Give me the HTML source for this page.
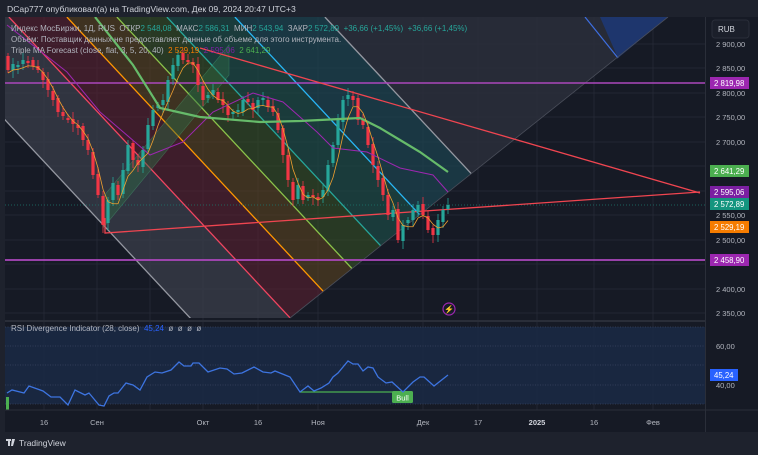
<!DOCTYPE html>
<html><head><meta charset="utf-8">
<style>
html,body{margin:0;padding:0;background:#1e222d;}
body{width:758px;height:455px;overflow:hidden;position:relative;font-family:"Liberation Sans",sans-serif;}
.t{position:absolute;white-space:nowrap;font-size:8px;color:#b2b5be;}
</style></head><body>
<div class="t" style="left:7px;top:4px;font-size:8.6px;color:#d1d4dc">DCap777 опубликовал(а) на TradingView.com, Дек 09, 2024 20:47 UTC+3</div>
<svg id="s" width="758" height="455" style="position:absolute;left:0;top:0" xmlns="http://www.w3.org/2000/svg">
<defs>
<clipPath id="main"><rect x="5" y="17" width="700" height="303"/></clipPath>
<clipPath id="fib"><polygon points="-200,17 668,17 290,318 -200,318"/></clipPath>
</defs>
<rect x="5" y="17" width="700" height="415" fill="#161a25"/>
<rect x="705" y="17" width="53" height="415" fill="#161a25"/>
<g stroke="#232734" stroke-width="1">
<line x1="5" x2="705" y1="44" y2="44"/><line x1="5" x2="705" y1="68" y2="68"/><line x1="5" x2="705" y1="93" y2="93"/><line x1="5" x2="705" y1="117" y2="117"/><line x1="5" x2="705" y1="142" y2="142"/><line x1="5" x2="705" y1="166" y2="166"/><line x1="5" x2="705" y1="191" y2="191"/><line x1="5" x2="705" y1="215" y2="215"/><line x1="5" x2="705" y1="240" y2="240"/><line x1="5" x2="705" y1="264" y2="264"/><line x1="5" x2="705" y1="289" y2="289"/><line x1="5" x2="705" y1="313" y2="313"/>
<line x1="44" x2="44" y1="17" y2="410"/><line x1="97" x2="97" y1="17" y2="410"/><line x1="150" x2="150" y1="17" y2="410"/><line x1="203" x2="203" y1="17" y2="410"/><line x1="258" x2="258" y1="17" y2="410"/><line x1="318" x2="318" y1="17" y2="410"/><line x1="423" x2="423" y1="17" y2="410"/><line x1="478" x2="478" y1="17" y2="410"/><line x1="537" x2="537" y1="17" y2="410"/><line x1="594" x2="594" y1="17" y2="410"/><line x1="653" x2="653" y1="17" y2="410"/>
</g>
<g clip-path="url(#main)">
<g clip-path="url(#fib)" id="fibg"></g>
<polygon points="600,17 668,17 618,58" fill="#1d3a7a" opacity="0.8"/>
<line x1="585" y1="17" x2="618" y2="58" stroke="#3d6ee0" stroke-width="1.2"/>
<line x1="290" y1="318" x2="668" y2="17" stroke="#4a4e5a" stroke-width="0.8"/>
<polygon points="103,228 229,75 229,45 103,197" fill="#2e6b45" opacity="0.45" stroke="#4caf7a" stroke-width="0.6"/>
<line x1="5" y1="83" x2="705" y2="83" stroke="#ab47bc" stroke-width="1.5"/>
<line x1="5" y1="260" x2="705" y2="260" stroke="#ab47bc" stroke-width="1.8"/>
<line x1="5" y1="205" x2="705" y2="205" stroke="#1b7a70" stroke-width="0.7" stroke-dasharray="1,2"/>
<polyline points="200,48 700,193" fill="none" stroke="#f04550" stroke-width="1.3"/>
<polyline points="105,218 105,233 700,192" fill="none" stroke="#f04550" stroke-width="1.3"/>
<g id="cand"></g>
<polyline id="purp" fill="none" stroke="#9c27b0" stroke-width="1" points="7,25 67,72 100,112 150,155 183,142 213,112 253,93 283,102 317,132 333,148 367,152 400,168 433,175 448,192"/>
<polyline fill="none" stroke="#66bb6a" stroke-width="2.2" points="95,17 133,65 160,108 200,117 260,122 300,121 340,119 360,118 380,128 400,140 420,152 448,172"/>
<polyline id="ora" fill="none" stroke="#f0a030" stroke-width="0.8"/>
<circle cx="449" cy="309" r="6" fill="none" stroke="#9c27b0" stroke-width="1.2"/>
<text x="449" y="312" font-size="8" fill="#b04ad0" text-anchor="middle">⚡</text>
</g>
<line x1="5" x2="705" y1="321" y2="321" stroke="#2a2e39" stroke-width="2"/>
<rect x="5" y="327" width="700" height="77" fill="#1a2a45" opacity="0.85"/>
<g stroke="#3a4560" stroke-width="0.8" stroke-dasharray="1,1.5">
<line x1="5" x2="705" y1="327" y2="327"/><line x1="5" x2="705" y1="346" y2="346"/><line x1="5" x2="705" y1="365" y2="365"/><line x1="5" x2="705" y1="385" y2="385"/><line x1="5" x2="705" y1="404" y2="404"/>
</g>
<line x1="300" y1="392" x2="403" y2="392" stroke="#4caf50" stroke-width="1.2"/>
<rect x="392" y="391" width="21" height="12" rx="1.5" fill="#4caf50"/>
<text x="402.5" y="400.5" font-size="7.5" fill="#fff" text-anchor="middle">Bull</text>
<rect x="6" y="397" width="3" height="13" fill="#4caf50"/>
<polyline fill="none" stroke="#3d74e0" stroke-width="1.3" points="7,393 12,390 24,393 29,386 43,391 51,397 60,397 68,405 75,390 85,395 89,393 99,405 104,406 109,396 114,393 118,393 126,383 133,385 140,390 147,377 155,372 162,373 171,370 179,362 184,366 191,366 193,363 199,363 208,372 220,368 227,369 234,374 242,373 254,367 263,372 271,373 275,371 285,375 290,377 300,392 308,386 314,391 321,388 329,383 333,377 338,373 348,361 353,364 358,364 363,371 368,367 373,368 378,377 386,383 392,382 403,392 413,382 420,377 424,377 434,386 448,375"/>
<line x1="5" x2="758" y1="410" y2="410" stroke="#2a2e39"/>
<line x1="705.5" x2="705.5" y1="17" y2="432" stroke="#2a2e39"/>
<g font-size="7.5" fill="#b2b5be" text-anchor="middle">
<text x="44" y="425">16</text><text x="97" y="425">Сен</text><text x="203" y="425">Окт</text><text x="258" y="425">16</text><text x="318" y="425">Ноя</text><text x="423" y="425">Дек</text><text x="478" y="425">17</text><text x="537" y="425" font-weight="bold" fill="#d1d4dc">2025</text><text x="594" y="425">16</text><text x="653" y="425">Фев</text>
</g>
<g font-size="7.5" fill="#b2b5be">
<text x="716" y="47">2 900,00</text><text x="716" y="71">2 850,00</text><text x="716" y="96">2 800,00</text><text x="716" y="120">2 750,00</text><text x="716" y="145">2 700,00</text><text x="716" y="218">2 550,00</text><text x="716" y="243">2 500,00</text><text x="716" y="292">2 400,00</text><text x="716" y="316">2 350,00</text>
<text x="716" y="349">60,00</text><text x="716" y="388">40,00</text>
</g>
<rect x="712" y="20" width="37" height="18" rx="3" fill="#1b1f2a" stroke="#2a2e39"/>
<text x="718" y="32" font-size="8" fill="#d1d4dc">RUB</text>
<g font-size="7.8" fill="#fff">
<rect x="710" y="77" width="39" height="12" fill="#9c27b0"/><text x="714" y="86">2 819,98</text>
<rect x="710" y="165" width="39" height="12" fill="#4caf50"/><text x="714" y="174">2 641,29</text>
<rect x="710" y="186" width="39" height="12" fill="#7b1fa2"/><text x="714" y="195">2 595,06</text>
<rect x="710" y="198" width="39" height="12" fill="#14957f"/><text x="714" y="207">2 572,89</text>
<rect x="710" y="221" width="39" height="12" fill="#f57c00"/><text x="714" y="230">2 529,19</text>
<rect x="710" y="254" width="39" height="12" fill="#9c27b0"/><text x="714" y="263">2 458,90</text>
<rect x="710" y="369" width="28" height="12" fill="#2962ff"/><text x="714" y="378">45,24</text>
</g>
<g transform="translate(6,439)" fill="#d1d4dc"><rect x="0" y="0" width="5" height="2"/><rect x="2" y="0" width="2" height="7"/><path d="M6 0h3l-2 7h-2z"/></g>
<text x="19" y="446" font-size="8.5" fill="#d1d4dc">TradingView</text>
</svg>
<div class="t" style="left:11px;top:24px">Индекс МосБиржи, 1Д, RUS&nbsp; ОТКР<span style="color:#26a69a">2 548,08</span>&nbsp; МАКС<span style="color:#26a69a">2 586,31</span>&nbsp; МИН<span style="color:#26a69a">2 543,94</span>&nbsp; ЗАКР<span style="color:#26a69a">2 572,89</span>&nbsp; <span style="color:#26a69a">+36,66 (+1,45%)&nbsp; +36,66 (+1,45%)</span></div>
<div class="t" style="left:11px;top:35px">Объём: Поставщик данных не предоставляет данные об объеме для этого инструмента.</div>
<div class="t" style="left:11px;top:46px">Triple MA Forecast (close, flat, 3, 5, 20, 40)&nbsp; <span style="color:#f57c00">2 529,19</span>&nbsp; <span style="color:#7b1fa2">2 595,06</span>&nbsp; <span style="color:#4caf50">2 641,29</span></div>
<div class="t" style="left:11px;top:324px">RSI Divergence Indicator (28, close)&nbsp; <span style="color:#2962ff">45,24</span>&nbsp; ø&nbsp; ø&nbsp; ø&nbsp; ø</div>
<script>
(function(){
var NS="http://www.w3.org/2000/svg";
function el(t,a,p){var e=document.createElementNS(NS,t);for(var key in a)e.setAttribute(key,a[key]);p.appendChild(e);return e;}
var fg=document.getElementById("fibg");
var kk=1/1.07;
function band(x0a,x0b,col,op){var y1=17,y2=320;el("polygon",{points:(x0a+(y1-15)*kk)+","+y1+" "+(x0b+(y1-15)*kk)+","+y1+" "+(x0b+(y2-15)*kk)+","+y2+" "+(x0a+(y2-15)*kk)+","+y2,fill:col,opacity:op},fg);}
function ln(x0,col){el("line",{x1:x0+2*kk,y1:17,x2:x0+305*kk,y2:320,stroke:col,"stroke-width":1.3},fg);}
band(-93,7,"#3a3e4a",0.75);band(7,65,"#5a2030",0.6);band(65,115,"#5a4220",0.6);band(115,165,"#354f25",0.6);band(165,233,"#1d4a45",0.7);band(233,323,"#1d4550",0.7);band(323,900,"#2c303c",0.8);
ln(-93,"#9598a1");ln(7,"#f04560");ln(65,"#ff9800");ln(115,"#8bc34a");ln(165,"#26a69a");ln(233,"#29b6f6");ln(323,"#9598a1");
var pts=[[10,70],[15,64],[20,65],[25,60],[30,62],[35,66],[40,70],[45,80],[50,90],[55,100],[60,112],[65,116],[70,120],[75,124],[80,128],[85,140],[90,150],[95,175],[100,195],[105,225],[110,200],[115,183],[120,195],[125,170],[130,145],[135,160],[140,165],[145,150],[150,125],[155,110],[160,105],[165,100],[170,80],[175,65],[180,55],[185,60],[190,60],[195,65],[200,85],[205,100],[210,95],[215,90],[220,100],[225,105],[230,115],[235,112],[240,110],[245,100],[250,102],[255,110],[260,100],[265,98],[270,107],[275,112],[280,130],[285,155],[290,180],[295,200],[300,185],[305,200],[310,195],[315,195],[320,198],[325,190],[330,165],[335,145],[340,120],[345,100],[350,95],[355,100],[360,120],[365,125],[370,145],[375,165],[380,180],[385,195],[390,215],[395,210],[400,240],[405,225],[410,220],[415,210],[420,205],[425,215],[430,230],[435,235],[440,220],[445,210],[450,205]];
var cg=document.getElementById("cand");var prev=58;
for(var i=0;i<pts.length;i++){var cx=pts[i][0]-2,c=pts[i][1],o=prev+((i*7)%5-2);var up=c<o;var col=up?"#26a69a":"#f23645";var yt=Math.min(o,c),yb=Math.max(o,c);if(yb-yt<2)yb=yt+2;
el("line",{x1:cx,x2:cx,y1:yt-3-(i*3)%5,y2:yb+3+(i*5)%6,stroke:col,"stroke-width":0.8},cg);
el("rect",{x:cx-1.6,y:yt,width:3.2,height:yb-yt,fill:col},cg);prev=c;}
var sm=[];for(var i=0;i<pts.length;i++){var a=0,n=0;for(var j=Math.max(0,i-3);j<=i;j++){a+=pts[j][1];n++;}sm.push((pts[i][0]-2)+","+(a/n+3));}
document.getElementById("ora").setAttribute("points",sm.join(" "));
})();
</script>
</body></html>
